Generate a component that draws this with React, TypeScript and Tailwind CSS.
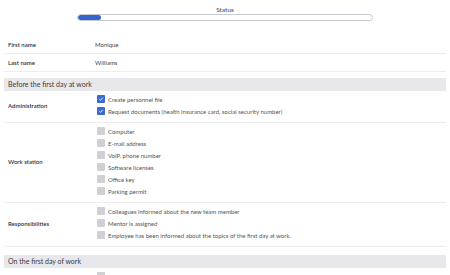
import React from 'react';

type Group = { label: string; items: { text: string; done?: boolean }[] };

const before: Group[] = [
  {
    label: 'Administration',
    items: [
      { text: 'Create personnel file', done: true },
      { text: 'Request documents (health insurance card, social security number)', done: true },
    ],
  },
  {
    label: 'Work station',
    items: [
      { text: 'Computer' },
      { text: 'E-mail address' },
      { text: 'VoIP, phone number' },
      { text: 'Software licenses' },
      { text: 'Office key' },
      { text: 'Parking permit' },
    ],
  },
  {
    label: 'Responsibilities',
    items: [
      { text: 'Colleagues informed about the new team member' },
      { text: 'Mentor is assigned' },
      { text: 'Employee has been informed about the topics of the first day at work.' },
    ],
  },
];

const Check = ({ done }: { done?: boolean }) =>
  done ? (
    <span className="w-[8px] h-[8px] rounded-[1px] bg-[#3a6bd0] flex items-center justify-center shrink-0">
      <svg viewBox="0 0 10 10" className="w-[6px] h-[6px]">
        <path d="M2 5.2 L4.2 7.3 L8 2.8" fill="none" stroke="#fff" strokeWidth="1.4" />
      </svg>
    </span>
  ) : (
    <span className="w-[8px] h-[8px] rounded-[1px] bg-[#d0d0d4] shrink-0" />
  );

const SectionHeader = ({ title }: { title: string }) => (
  <div className="h-[13px] bg-[#e8e8ec] flex items-center px-[4px] text-[7px] text-[#3a3a3a]">{title}</div>
);

const App: React.FC = () => {
  return (
    <div className="w-[450px] h-[275px] overflow-hidden bg-white px-[4px] text-[#333]" style={{ fontFamily: 'Lato, "Open Sans", sans-serif' }}>
      <div className="flex flex-col items-center pt-[6px]">
        <div className="text-[6.5px] leading-[7px] text-[#444]">Status</div>
        <div className="mt-[1px] w-[296px] h-[7px] rounded-full border border-[#c6c9d0] bg-white overflow-hidden">
          <div className="h-full w-[23px] bg-[#3565cc] rounded-full" />
        </div>
      </div>

      <div className="mt-[15px]">
        <div className="h-[18px] flex items-center border-b border-[#ededf0] text-[6px]">
          <span className="w-[91px] pl-[4px] font-semibold">First name</span>
          <span className="text-[#444]">Monique</span>
        </div>
        <div className="h-[18px] flex items-center border-b border-[#ededf0] text-[6px]">
          <span className="w-[91px] pl-[4px] font-semibold">Last name</span>
          <span className="text-[#444]">Williams</span>
        </div>
      </div>

      <div className="mt-[6px]">
        <SectionHeader title="Before the first day at work" />
        {before.map(g => (
          <div key={g.label} className="flex items-center border-b border-[#ededf0] pt-[2px] pb-[5px]">
            <span className="w-[93px] pl-[4px] font-semibold text-[6px]">{g.label}</span>
            <div className="flex flex-col">
              {g.items.map(it => (
                <div key={it.text} className="h-[12px] flex items-center gap-[3px] text-[6px] text-[#555]">
                  <Check done={it.done} />
                  <span>{it.text}</span>
                </div>
              ))}
            </div>
          </div>
        ))}
      </div>

      <div className="mt-[8px]">
        <SectionHeader title="On the first day of work" />
        <div className="flex items-center pt-[2px]">
          <span className="w-[93px]" />
          <div className="h-[12px] flex items-center gap-[3px] text-[6px] text-[#555]">
            <Check />
            <span>Personal meeting</span>
          </div>
        </div>
      </div>
    </div>
  );
};

export default App;
